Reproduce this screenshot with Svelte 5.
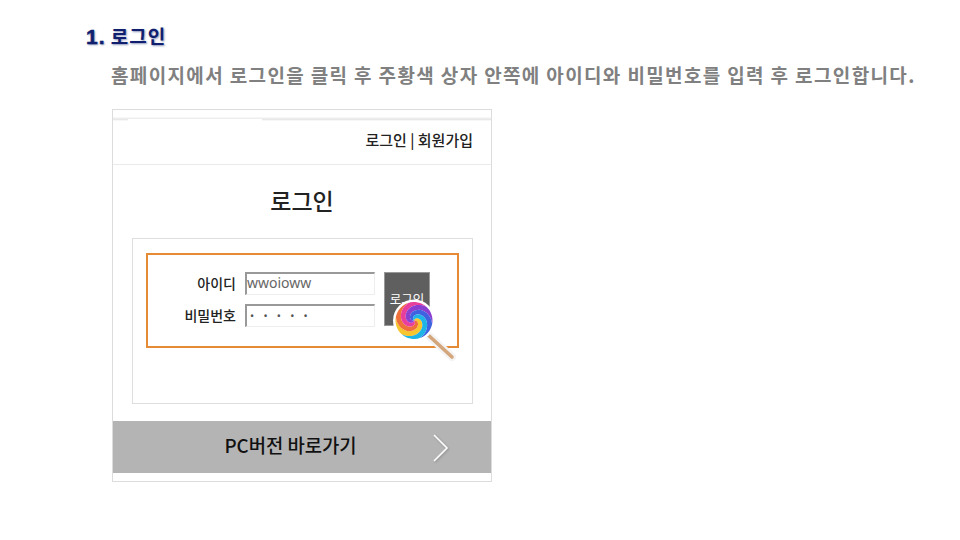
<script>
  // spiral wedges for the lollipop candy
  const colors = ["#f7c52e", "#f0703a", "#e83f9c", "#8a3fd0", "#3f62e0", "#1fb4e6"];
  const cx = 22, cy = 21.5, r = 18.5;
  const twist = 3.7;

  function wedge(i) {
    const step = (Math.PI * 2) / colors.length;
    const start = i * step + 2.3 - twist;
    const pts = [];
    for (let t = 0; t <= 1.001; t += 0.04) {
      const a = start + t * twist;
      pts.push([cx + Math.cos(a) * r * t, cy + Math.sin(a) * r * t]);
    }
    for (let k = 0; k <= 8; k++) {
      const a = start + twist + (k / 8) * step;
      pts.push([cx + Math.cos(a) * r, cy + Math.sin(a) * r]);
    }
    for (let t = 1; t >= 0; t -= 0.04) {
      const a = start + step + t * twist;
      pts.push([cx + Math.cos(a) * r * t, cy + Math.sin(a) * r * t]);
    }
    return "M" + pts.map((p) => p[0].toFixed(2) + " " + p[1].toFixed(2)).join("L") + "Z";
  }
</script>

<div class="page">
  <h1 class="title"><span class="num">1.</span> <span class="ko">로그인</span></h1>
  <p class="desc">홈페이지에서 로그인을 클릭 후 주황색 상자 안쪽에 아이디와 비밀번호를 입력 후 로그인합니다.</p>

  <div class="shot">
    <div class="strip"><div class="strip-white"></div></div>
    <div class="top">로그인 | 회원가입</div>
    <h2 class="head">로그인</h2>
    <div class="panel">
      <div class="orange">
        <div class="fields">
          <div class="row">
            <span class="label">아이디</span>
            <div class="input">wwoioww</div>
          </div>
          <div class="row">
            <span class="label">비밀번호</span>
            <div class="input dots">• • • • •</div>
          </div>
        </div>
        <div class="btn">로그인</div>
        <svg class="pop" width="70" height="70" viewBox="0 0 70 70">
          <line x1="34" y1="34" x2="60" y2="58" stroke="#f4f4f4" stroke-width="8" stroke-linecap="round" />
          <line x1="34" y1="34" x2="60" y2="58" stroke="#d3a67c" stroke-width="3.6" stroke-linecap="round" />
          <circle cx="22" cy="21.5" r="21" fill="#fff" />
          {#each colors as _, i}
            <path d={wedge(i)} fill={colors[i]} />
          {/each}
        </svg>
      </div>
    </div>
    <div class="pc">
      <span>PC버전 바로가기</span>
      <svg class="arrow" width="18" height="30" viewBox="0 0 18 30">
        <path d="M2 2 L15 15 L2 28" fill="none" stroke="#fff" stroke-width="1.6" />
      </svg>
    </div>
  </div>
</div>

<style>
  :global(body) {
    margin: 0;
    background: #fff;
  }

  .page {
    width: 960px;
    height: 540px;
    box-sizing: border-box;
    padding: 24px 0 0 86px;
    overflow: hidden;
    font-family: "Noto Sans CJK KR", "Liberation Sans", sans-serif;
  }

  .title {
    margin: 0;
    font-size: 19px;
    line-height: 24px;
    font-weight: 700;
    letter-spacing: 1px;
    color: #10206e;
    text-shadow: 1px 1px 2px #8a93b5;
    white-space: nowrap;
  }

  .num {
    font-family: "Liberation Sans", sans-serif;
    font-size: 21px;
    -webkit-text-stroke: 0.5px #10206e;
  }

  .desc {
    margin: 13px 0 0 25px;
    font-size: 19px;
    line-height: 26px;
    font-weight: 700;
    letter-spacing: 1.36px;
    color: #808080;
    white-space: nowrap;
  }

  .shot {
    margin: 21px 0 0 26px;
    width: 380px;
    height: 373px;
    box-sizing: border-box;
    border: 1px solid #dcdcdc;
    position: relative;
  }

  .strip {
    height: 11px;
    background: linear-gradient(#fff 0 60%, #e6e6e6 85%, #fff);
    position: relative;
  }

  .strip-white {
    position: absolute;
    left: 15px;
    top: 9px;
    width: 134px;
    height: 2px;
    background: #fff;
  }

  .top {
    height: 44px;
    box-sizing: border-box;
    padding: 8px 18px 0 0;
    text-align: right;
    font-size: 15px;
    line-height: 22px;
    font-weight: 500;
    color: #222;
    border-bottom: 1px solid #eaeaea;
  }

  .head {
    margin: 19px 0 0;
    text-align: center;
    font-size: 23px;
    line-height: 32px;
    font-weight: 500;
    color: #222;
  }

  .panel {
    margin: 22px 18px 0 19px;
    height: 166px;
    box-sizing: border-box;
    border: 1px solid #dedede;
    padding: 14px 13px 0;
  }

  .orange {
    height: 95px;
    box-sizing: border-box;
    border: 2px solid #e58a35;
    display: flex;
    padding: 17px 0 0 0;
    position: relative;
  }

  .fields {
    display: flex;
    flex-direction: column;
    gap: 9px;
  }

  .row {
    display: flex;
    align-items: center;
    gap: 9px;
  }

  .label {
    width: 88px;
    text-align: right;
    font-size: 14px;
    line-height: 19px;
    color: #222;
    font-weight: 500;
  }

  .input {
    width: 130px;
    height: 23px;
    box-sizing: border-box;
    border: 1px solid #eee;
    border-top: 2px solid #999;
    border-left: 2px solid #999;
    font-family: "Noto Sans", sans-serif;
    font-size: 14px;
    line-height: 17px;
    color: #666;
  }

  .dots {
    font-size: 11px;
    letter-spacing: 3.2px;
    padding-left: 3px;
    line-height: 19px;
    color: #555;
  }

  .btn {
    margin-left: 9px;
    width: 46px;
    height: 54px;
    box-sizing: border-box;
    background: #5f5f5f;
    border: 1px solid #999;
    color: #fff;
    font-size: 12.5px;
    text-align: center;
    padding-top: 16px;
    line-height: 20px;
  }

  .pop {
    position: absolute;
    left: 244px;
    top: 44px;
  }

  .pc {
    position: absolute;
    left: 0;
    right: 0;
    top: 311px;
    height: 52px;
    background: #b4b4b4;
    display: flex;
    align-items: center;
    justify-content: center;
    box-sizing: border-box;
    padding: 0 23px 6px 0;
    font-size: 18.8px;
    font-weight: 500;
    color: #111;
  }

  .arrow {
    position: absolute;
    left: 319px;
    top: 12px;
    filter: drop-shadow(1px 1px 1px rgba(0, 0, 0, 0.2));
  }
</style>
